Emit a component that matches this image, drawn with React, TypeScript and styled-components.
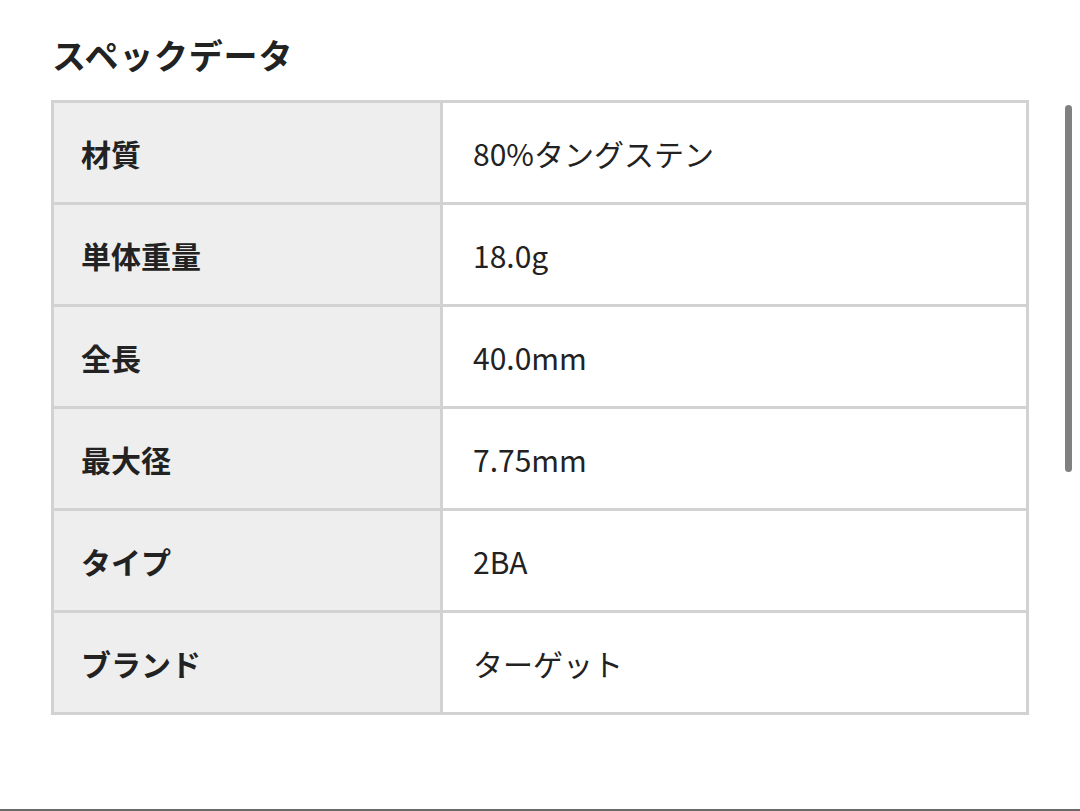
import React, { FC } from 'react';
import styled, { createGlobalStyle } from 'styled-components';

const GlobalStyle = createGlobalStyle`
  html, body {
    margin: 0;
    padding: 0;
    background: #ffffff;
  }
  body {
    font-family: 'Noto Sans CJK JP', 'Noto Sans', sans-serif;
    color: #222222;
  }
`;

const Page = styled.div`
  box-sizing: border-box;
  display: flex;
  flex-direction: column;
  height: 811px;
  overflow: hidden;
  position: relative;
  width: 1080px;
`;

const Content = styled.main`
  flex: 1;
  padding: 31px 51px 0 51px;
`;

const Title = styled.h2`
  font-size: 34px;
  font-weight: 700;
  letter-spacing: 0.8px;
  line-height: 48px;
  margin: 0 0 21px 1px;
`;

const SpecTable = styled.table`
  border: 3px solid #d2d2d2;
  border-collapse: collapse;
  width: 978px;
`;

const Row = styled.tr`
  height: 102px;
`;

const LabelCell = styled.th`
  background-color: #eeeeee;
  border: 3px solid #d2d2d2;
  box-sizing: border-box;
  font-size: 30px;
  font-weight: 700;
  padding: 0 0 0 27px;
  text-align: left;
  width: 389px;
`;

const ValueCell = styled.td`
  border: 3px solid #d2d2d2;
  font-size: 30px;
  font-weight: 400;
  padding: 0 0 0 30px;
`;

const Scrollbar = styled.div`
  background-color: #808080;
  border-radius: 4px;
  height: 367px;
  position: absolute;
  right: 8px;
  top: 105px;
  width: 7px;
`;

const BottomBar = styled.div`
  background-color: #6a6a6a;
  height: 2px;
`;

interface Spec {
  label: string;
  value: string;
}

const specs: Spec[] = [
  { label: '材質', value: '80%タングステン' },
  { label: '単体重量', value: '18.0g' },
  { label: '全長', value: '40.0mm' },
  { label: '最大径', value: '7.75mm' },
  { label: 'タイプ', value: '2BA' },
  { label: 'ブランド', value: 'ターゲット' },
];

const App: FC = () => {
  return (
    <>
      <GlobalStyle />
      <Page>
        <Content>
          <Title>スペックデータ</Title>
          <SpecTable>
            <tbody>
              {specs.map((spec) => (
                <Row key={spec.label}>
                  <LabelCell>{spec.label}</LabelCell>
                  <ValueCell>{spec.value}</ValueCell>
                </Row>
              ))}
            </tbody>
          </SpecTable>
        </Content>
        <BottomBar />
        <Scrollbar />
      </Page>
    </>
  );
};

export default App;
